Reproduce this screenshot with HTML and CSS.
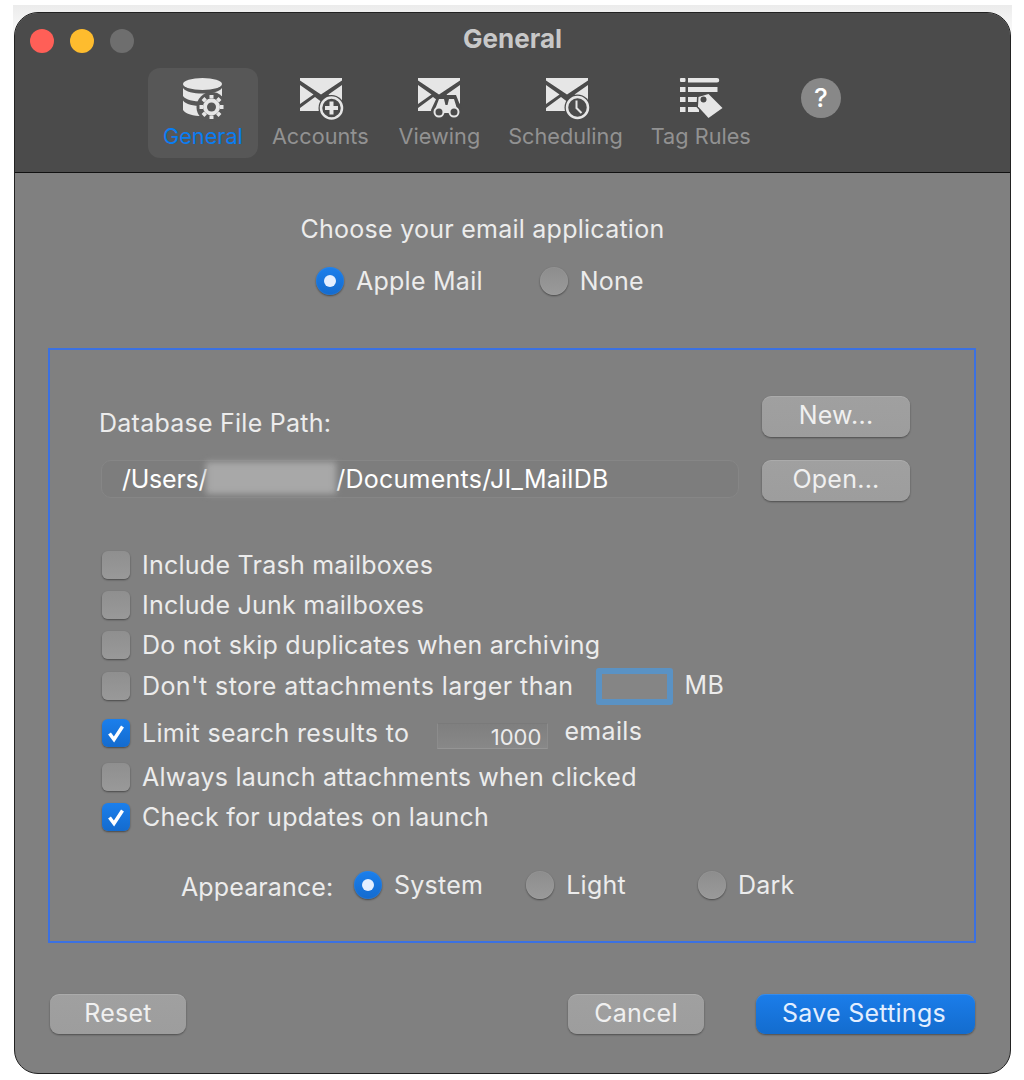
FILE: index.html
```html
<!DOCTYPE html>
<html lang="en">
<head>
<meta charset="utf-8">
<title>General</title>
<link rel="stylesheet" href="styles.css">
</head>
<body>
<div class="desk">
<main class="window">
  <header class="titlebar">
    <div class="titlerow">
      <div class="lights"><span class="light red"></span><span class="light yellow"></span><span class="light grey"></span></div>
      <div class="title">General</div>
      <div></div>
    </div>
    <nav class="toolbar">
      <div class="tab active">
        <svg class="icon" viewBox="0 0 42 42" width="42" height="42">
          <ellipse class="fg" cx="20.500" cy="7" rx="19.500" ry="6"/>
          <path class="fg" d="M1 11c3 4 10 5.500 19.500 5.500S37 15 40 11v8c-3 4-10 5.500-19.500 5.500S4 23 1 19z"/>
          <path class="fg" d="M1 23.500c3 4 10 5.500 19.500 5.500S37 27.500 40 23.500V33c-3 4-10 6-19.500 6S4 37 1 33z"/>
          <circle class="cut-a" cx="29.500" cy="30" r="15"/>
          <g class="gear">
            <circle cx="29.500" cy="30" r="8.500"/>
            <path d="M29.500 18v24M17.500 30h24M21 21.500l17 17M38 21.500l-17 17"/>
          </g>
          <circle class="cut-a" cx="29.500" cy="30" r="4.500"/>
        </svg>
        <span class="tab-label">General</span>
      </div>
      <div class="tab acct">
        <svg class="icon" viewBox="-3 -1 46 42" width="46" height="42">
          <path class="fg" d="M0 0H42V2.500L21 16.500L0 2.500Z M0 7L13.500 16.500L0 26Z M42 7L28.500 16.500L42 26Z M0 33V30L15 19L21 23.500L27 19L42 30V33Z"/>
          <circle class="cut" cx="31.500" cy="30" r="13"/>
          <circle class="ring" cx="31.500" cy="30" r="10.500"/>
          <path class="bar" d="M31.500 23.500v13M25 30h13"/>
        </svg>
        <span class="tab-label">Accounts</span>
      </div>
      <div class="tab">
        <svg class="icon" viewBox="-2 -1 46 42" width="46" height="42">
          <path class="fg" d="M0 0H42V2.500L21 16.500L0 2.500Z M0 7L13.500 16.500L0 26Z M42 7L28.500 16.500L42 26Z M0 33V30L15 19L21 23.500L27 19L42 30V33Z"/>
          <path class="cut" d="M14 42L13 32L20 17H38L44 32V42Z"/>
          <path class="fg" d="M21 21h5l1.500 6h2l1.500-6h5l4 13-9 1h-6l-9-1z"/>
          <circle class="bino" cx="21" cy="34" r="4.500"/>
          <circle class="bino" cx="36" cy="34" r="4.500"/>
        </svg>
        <span class="tab-label">Viewing</span>
      </div>
      <div class="tab sched">
        <svg class="icon" viewBox="-4 -1 46 42" width="46" height="42">
          <path class="fg" d="M0 0H42V2.500L21 16.500L0 2.500Z M0 7L13.500 16.500L0 26Z M42 7L28.500 16.500L42 26Z M0 33V30L15 19L21 23.500L27 19L42 30V33Z"/>
          <circle class="cut" cx="31.500" cy="29.500" r="13"/>
          <circle class="ring" cx="31.500" cy="29.500" r="10.500"/>
          <path class="hand" d="M30.500 22.500v7.500l5 5"/>
        </svg>
        <span class="tab-label">Scheduling</span>
      </div>
      <div class="tab tagrules">
        <svg class="icon" viewBox="-1 0 46 42" width="46" height="42">
          <path class="fg" d="M1 2.500A1 1 0 0 1 2 1h3.500a1 1 0 0 1 1 1v2a1 1 0 0 1-1 1H2a1 1 0 0 1-1-1z M9 1h29a1.500 1.500 0 0 1 0 4.500H9z M1 10h5.500v5H1z M9 10h29.500v5H9z M1 20h5.500v5H1z M9 20h11v5H9z M1 30h5.500v5H1z M9 30h11v5H9z"/>
          <path class="tag" d="M19.500 20l10-3 14 14-14 10L19 29.500z"/>
          <circle class="cut" cx="24.500" cy="22.500" r="3"/>
        </svg>
        <span class="tab-label">Tag Rules</span>
      </div>
      <div class="help">?</div>
    </nav>
  </header>

  <section class="content">
    <h1 class="choose">Choose your email application</h1>
    <div class="mail-options">
      <label class="opt"><span class="radio on"></span>Apple Mail</label>
      <label class="opt"><span class="radio"></span>None</label>
    </div>

    <div class="panel">
      <div class="db-row">
        <span class="db-label">Database File Path:</span>
        <button class="btn side">New...</button>
      </div>
      <div class="path-row">
        <div class="path"><span class="users">/Users/</span><span class="blur"></span><span>/Documents/JI_MailDB</span></div>
        <button class="btn side">Open...</button>
      </div>

      <div class="checks">
        <label class="check"><span class="box"></span>Include Trash mailboxes</label>
        <label class="check"><span class="box"></span>Include Junk mailboxes</label>
        <label class="check"><span class="box"></span>Do not skip duplicates when archiving</label>
        <label class="check r4"><span class="box"></span>Don't store attachments larger than<span class="focus-field"></span><span class="mb">MB</span></label>
        <label class="check r5"><span class="box on"><svg viewBox="0 0 28 28" width="28" height="28"><path d="M7.500 14.500l4.500 6 8.500-13"/></svg></span>Limit search results to<span class="num-field">1000</span><span class="emails">emails</span></label>
        <label class="check r6"><span class="box"></span>Always launch attachments when clicked</label>
        <label class="check"><span class="box on"><svg viewBox="0 0 28 28" width="28" height="28"><path d="M7.500 14.500l4.500 6 8.500-13"/></svg></span>Check for updates on launch</label>
      </div>

      <div class="appearance">
        <span class="app-label">Appearance:</span>
        <label class="opt a1"><span class="radio on"></span>System</label>
        <label class="opt a2"><span class="radio"></span>Light</label>
        <label class="opt a3"><span class="radio"></span>Dark</label>
      </div>
    </div>

    <footer class="footer">
      <button class="btn wide">Reset</button>
      <button class="btn wide push">Cancel</button>
      <button class="btn primary">Save Settings</button>
    </footer>
  </section>
</main>
</div>
</body>
</html>
```

FILE: styles.css
```css
* { box-sizing: border-box; }
html, body { margin: 0; padding: 0; background: #fff; }
body { padding-top: 5px; font-family: Inter, "Liberation Sans", sans-serif; font-size: 25px; letter-spacing: .25px; color: #ececec; }
.desk { margin-left: 13px; width: 999px; padding: 7px 1px 6px; background: linear-gradient(#ececec, #fff 40px); }
.window { height: 1062px; border: 1px solid #222; border-radius: 24px; overflow: hidden; background: #808080; display: flex; flex-direction: column; }

.titlebar { height: 160px; background: #4b4b4b; border-bottom: 1px solid #111; flex: none; }
.titlerow { display: grid; grid-template-columns: 1fr auto 1fr; align-items: center; height: 55px; padding: 15px 15px 16px; }
.lights { display: flex; gap: 16px; }
.light { width: 24px; height: 24px; border-radius: 50%; }
.red { background: #ff5f57; }
.yellow { background: #febc2e; }
.grey { background: #6e6e6e; }
.title { font-weight: 700; font-size: 26px; letter-spacing: 0; color: #c8c8c8; margin-top: -5px; }

.toolbar { display: flex; align-items: flex-start; padding-left: 133px; }
.tab { height: 90px; padding: 9px 15px 0; border-radius: 12px; display: flex; flex-direction: column; align-items: center; }
.tab.active { background: #575757; }
.acct { margin-left: -1px; }
.sched { margin-left: -2px; }
.tagrules { margin-left: -2px; }
.icon { display: block; flex: none; overflow: visible; }
.tab-label { margin-top: 2px; line-height: 30px; font-size: 21.700px; letter-spacing: 0; color: #929292; white-space: nowrap; }
.active .tab-label { color: #0a7df2; }
.fg { fill: #e6e6e6; }
.cut { fill: #4b4b4b; }
.cut-a { fill: #575757; }
.ring { fill: none; stroke: #e6e6e6; stroke-width: 2.500; }
.bar { fill: none; stroke: #e6e6e6; stroke-width: 4; }
.hand { fill: none; stroke: #e6e6e6; stroke-width: 2; }
.gear circle { fill: #e6e6e6; }
.gear path { fill: none; stroke: #e6e6e6; stroke-width: 4; stroke-dasharray: 3.500 17 4 0; }
.bino { fill: #4b4b4b; stroke: #e6e6e6; stroke-width: 2; }
.tag { fill: #e6e6e6; stroke: #4b4b4b; stroke-width: 3; paint-order: stroke; }
.help { width: 40px; height: 40px; margin: 10px 0 0 35px; border-radius: 50%; background: #888; color: #fff; font-weight: 500; font-size: 26px; letter-spacing: 0; line-height: 40px; text-align: center; }

.content { flex: 1; display: flex; flex-direction: column; }
.choose { margin: 41px 60px 0 0; font-weight: 400; font-size: 25px; line-height: 30px; text-align: center; color: #ececec; }
.mail-options { display: flex; margin: 22px 0 0 301px; gap: 57px; height: 30px; align-items: center; }
.opt { display: flex; align-items: center; gap: 12px; white-space: nowrap; line-height: 30px; }
.radio { width: 28px; height: 28px; border-radius: 50%; background: linear-gradient(#8d8d8d, #9a9a9a); box-shadow: 0 1px 2px rgba(0,0,0,.45), inset 0 0 0 1px rgba(255,255,255,.04); display: flex; align-items: center; justify-content: center; flex: none; }
.radio.on { background: linear-gradient(#1b7fec, #146bce); }
.radio.on::after { content: ""; width: 12px; height: 12px; border-radius: 50%; background: #e4efff; }

.panel { margin: 52px 34px 0 33px; height: 595px; border: 2px solid #3b71e2; padding: 46px 64px 0 49px; flex: none; }
.db-row { display: flex; justify-content: space-between; }
.db-label { padding-top: 12px; line-height: 30px; }
.path-row { display: flex; justify-content: space-between; margin-top: 22px; }
.path { margin-left: 2px; width: 638px; height: 38px; border-radius: 10px; border: 1px solid #868686; background: #7d7d7d; padding-left: 20px; display: flex; align-items: center; color: #fff; }
.users { letter-spacing: -.25px; }
.blur { width: 130px; height: 32px; margin: -2px 0 0 -1px; background: #a8a8a8; filter: blur(3px); }

.btn { font: inherit; letter-spacing: inherit; color: #f0f0f0; border: 0; border-radius: 9px; height: 41px; padding: 0 0 2px; background: linear-gradient(#a0a0a0, #9d9d9d); box-shadow: 0 1px 2px rgba(0,0,0,.4), inset 0 1px 0 rgba(255,255,255,.12); }
.side { width: 148px; padding-bottom: 4px; }
.wide { width: 136px; height: 40px; }
.primary { width: 219px; height: 40px; margin-left: 52px; padding-right: 3px; color: #e2eeff; background: linear-gradient(#1b7dea, #136cce); }

.checks { margin-top: 50px; margin-left: 3px; display: flex; flex-direction: column; gap: 12px; }
.check { display: flex; align-items: center; height: 28px; gap: 12px; white-space: nowrap; line-height: 30px; }
.box { width: 28px; height: 28px; border-radius: 6px; background: linear-gradient(#8f8f8f, #999); box-shadow: 0 1px 2px rgba(0,0,0,.45); flex: none; }
.box.on { background: linear-gradient(#1b7fec, #146bce); }
.box svg { display: block; fill: none; stroke: #fff; stroke-width: 3.500; }
.r4 { margin-top: 1px; letter-spacing: .42px; }
.r5 { margin-top: 7px; letter-spacing: .34px; }
.r6 { margin-top: 4px; }
.focus-field { width: 77px; height: 37px; margin-left: 10px; border: 6px solid #5a92c4; border-radius: 3px; background: #858585; flex: none; }
.mb { margin: -2px 0 0 0; }
.num-field { width: 111px; height: 26px; margin: 6px 0 0 16px; background: linear-gradient(#7f7f7f, #888); border: 1px solid #8c8c8c; border-top-color: #7a7a7a; border-bottom-color: #959595; text-align: right; padding-right: 6px; font-size: 22px; letter-spacing: 0; line-height: 26px; flex: none; }
.emails { margin: -4px 0 0 4px; }

.appearance { display: flex; align-items: center; height: 30px; margin-top: 39px; margin-left: 82px; }
.app-label { width: 173px; padding-top: 4px; letter-spacing: .12px; }
.a2 { margin-left: 43px; }
.a3 { margin-left: 72px; }

.footer { display: flex; margin: 51px 35px 0 35px; }
.push { margin-left: auto; }
```
